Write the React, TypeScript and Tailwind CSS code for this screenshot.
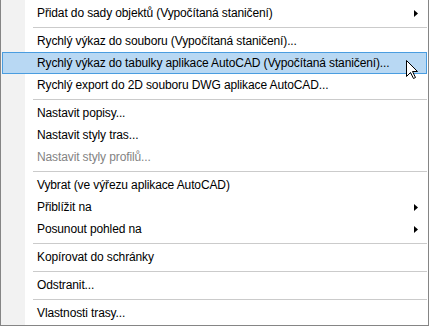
import React from "react";

type Item =
  | { kind: "sep" }
  | { kind: "item"; label: string; sub?: boolean; disabled?: boolean; active?: boolean };

const items: Item[] = [
  { kind: "item", label: "Přidat do sady objektů (Vypočítaná staničení)", sub: true },
  { kind: "sep" },
  { kind: "item", label: "Rychlý výkaz do souboru (Vypočítaná staničení)..." },
  { kind: "item", label: "Rychlý výkaz do tabulky aplikace AutoCAD (Vypočítaná staničení)...", active: true },
  { kind: "item", label: "Rychlý export do 2D souboru DWG aplikace AutoCAD..." },
  { kind: "sep" },
  { kind: "item", label: "Nastavit popisy..." },
  { kind: "item", label: "Nastavit styly tras..." },
  { kind: "item", label: "Nastavit styly profilů...", disabled: true },
  { kind: "sep" },
  { kind: "item", label: "Vybrat (ve výřezu aplikace AutoCAD)" },
  { kind: "item", label: "Přiblížit na", sub: true },
  { kind: "item", label: "Posunout pohled na", sub: true },
  { kind: "sep" },
  { kind: "item", label: "Kopírovat do schránky" },
  { kind: "sep" },
  { kind: "item", label: "Odstranit..." },
  { kind: "sep" },
  { kind: "item", label: "Vlastnosti trasy..." },
];

function SubArrow() {
  return (
    <svg width="4" height="7" viewBox="0 0 4 7" className="shrink-0">
      <path d="M0 0 L4 3.5 L0 7 Z" fill="#000" />
    </svg>
  );
}

function Cursor() {
  return (
    <svg width="13" height="20" viewBox="0 0 13 20" className="absolute left-[406px] top-[60px]">
      <path
        d="M0.5 0.5 L0.5 16.5 L4.5 12.5 L7.5 18.5 L9.5 17.5 L6.5 11.5 L11.5 11.5 Z"
        fill="#fff"
        stroke="#000"
        strokeWidth="1"
        strokeLinejoin="miter"
      />
    </svg>
  );
}

export default function App() {
  return (
    <div className="relative h-[326px] w-[429px] bg-white" style={{ fontFamily: '"Liberation Sans", Arial, sans-serif' }}>
      <div className="flex h-full flex-col border-x border-b border-[#858585] bg-[linear-gradient(to_right,#f2f2f2_24px,#ffffff_24px)] pt-[2px] text-[12px] tracking-[-0.12px] text-black">
        {items.map((it, i) =>
          it.kind === "sep" ? (
            <div key={i} className="flex h-[6px] items-center pl-[32px] pr-[1px]">
              <div className="h-px w-full bg-[#cbcbcb]" />
            </div>
          ) : (
            <div
              key={i}
              className={
                "mx-[1px] flex h-[22px] items-center justify-between border pl-[34px] pr-[8px] " +
                (it.active ? "border-[#4a9de0] bg-[#b8d8f3]" : "border-transparent") +
                (it.disabled ? " text-[#838383]" : "")
              }
            >
              <span className="whitespace-nowrap leading-none">{it.label}</span>
              {it.sub && <SubArrow />}
            </div>
          )
        )}
      </div>
      <Cursor />
    </div>
  );
}
